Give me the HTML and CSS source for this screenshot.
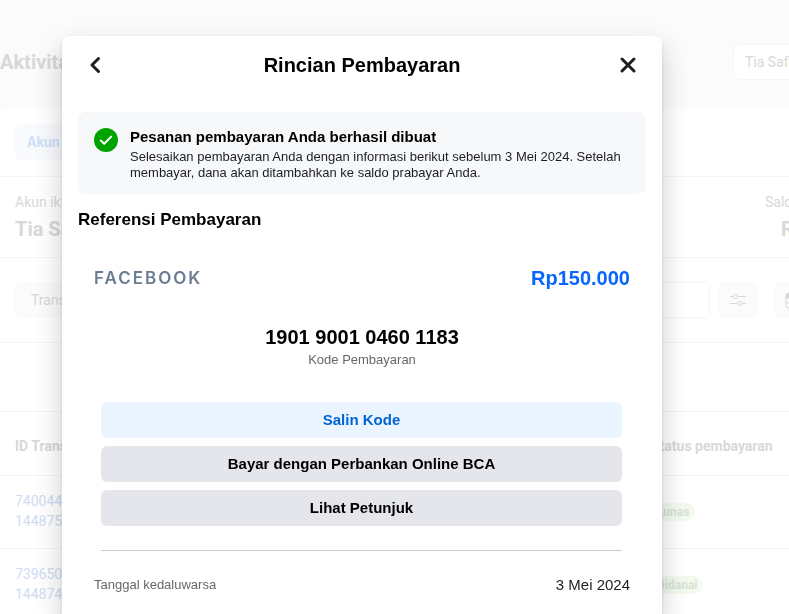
FILE: index.html
```html
<!DOCTYPE html>
<html lang="id">

<head>
    <meta charset="UTF-8">
    <meta name="viewport" content="width=device-width, initial-scale=1.0">
    <title>Rincian Pembayaran</title>
    <link rel="stylesheet" href="styles.css">
</head>

<body>
    <div class="page">
        <header class="page_head">
            <h1>Aktivitas pembayaran</h1>
            <button class="account_btn" type="button">Tia Safitri</button>
        </header>
        <main class="card">
            <nav class="tabs">
                <a href="#" class="tab">Akun iklan</a>
            </nav>
            <div class="account">
                <div>
                    <p>Akun iklan</p>
                    <strong>Tia Safitri</strong>
                </div>
                <div class="balance">
                    <p>Saldo prabayar</p>
                    <strong>Rp150.000</strong>
                </div>
            </div>
            <div class="filter">
                <button class="filter_btn" type="button">Transaksi</button>
                <input class="search" type="text" aria-label="Cari transaksi">
                <button class="icon_btn" type="button" aria-label="Filter">
                    <svg width="18" height="14" viewBox="0 0 18 14" fill="none" stroke="currentColor">
                        <path d="M1 3.500h3M9 3.500h8M1 10.500h7.500M13.500 10.500h3.500" />
                        <circle cx="6.500" cy="3.500" r="2.200" />
                        <circle cx="11" cy="10.500" r="2.200" />
                    </svg>
                </button>
                <button class="icon_btn date_btn" type="button" aria-label="Tanggal">
                    <svg width="18" height="18" viewBox="0 0 18 18" fill="none" stroke="currentColor">
                        <rect x="1" y="2" width="16" height="15" rx="3" />
                        <path d="M1 7V5a3 3 0 0 1 3-3h10a3 3 0 0 1 3 3v2z" fill="currentColor" />
                        <path d="M1 12h16M6 7v10M12 7v10" />
                    </svg>
                </button>
            </div>
            <table class="list">
                <thead>
                    <tr>
                        <th>ID Transaksi</th>
                        <th>Status pembayaran</th>
                    </tr>
                </thead>
                <tbody>
                    <tr>
                        <td><a href="#">740044<br>144875</a></td>
                        <td><span class="badge">Lunas</span></td>
                    </tr>
                    <tr>
                        <td><a href="#">739650<br>144874</a></td>
                        <td><span class="badge">Didanai</span></td>
                    </tr>
                </tbody>
            </table>
        </main>
    </div>

    <div class="layer">
        <section class="modal" role="dialog" aria-labelledby="modal_title">
            <header class="modal_head">
                <button class="nav_btn" type="button" aria-label="Kembali">
                    <svg width="20" height="20" viewBox="0 0 20 20">
                        <path d="M12.500 3.500 6 10l6.500 6.500" />
                    </svg>
                </button>
                <h2 id="modal_title">Rincian Pembayaran</h2>
                <button class="nav_btn" type="button" aria-label="Tutup">
                    <svg width="20" height="20" viewBox="0 0 20 20">
                        <path d="M4 4l12 12M16 4L4 16" />
                    </svg>
                </button>
            </header>

            <div class="notice">
                <svg class="notice_icon" width="24" height="24" viewBox="0 0 24 24">
                    <circle cx="12" cy="12" r="12" fill="#00a400" />
                    <path d="M6.800 12.500l3.400 3.300 7-7.200" fill="none" stroke="#fff" stroke-width="2" stroke-linecap="round" stroke-linejoin="round" />
                </svg>
                <div>
                    <h3>Pesanan pembayaran Anda berhasil dibuat</h3>
                    <p>Selesaikan pembayaran Anda dengan informasi berikut sebelum 3 Mei 2024. Setelah membayar, dana akan ditambahkan ke saldo prabayar Anda.</p>
                </div>
            </div>

            <h3 class="section_title">Referensi Pembayaran</h3>

            <div class="row amount">
                <span class="brand">FACEBOOK</span>
                <span class="price">Rp150.000</span>
            </div>

            <div class="code">
                <strong>1901 9001 0460 1183</strong>
                <span>Kode Pembayaran</span>
            </div>

            <div class="actions">
                <button class="btn btn_primary" type="button">Salin Kode</button>
                <button class="btn" type="button">Bayar dengan Perbankan Online BCA</button>
                <button class="btn" type="button">Lihat Petunjuk</button>
            </div>

            <div class="row expiry">
                <span class="label">Tanggal kedaluwarsa</span>
                <span class="date">3 Mei 2024</span>
            </div>
        </section>
    </div>
</body>

</html>
```

FILE: styles.css
```css
* {
    margin: 0;
    padding: 0;
    box-sizing: border-box;
}

html,
body {
    height: 100%;
}

body {
    overflow: hidden;
    font-family: Roboto, "Liberation Sans", sans-serif;
    font-size: 14px;
    line-height: 20px;
    color: #d8d8d8;
    background: #fbfbfb;
}

button,
input {
    font: inherit;
    color: inherit;
    border: none;
}

a {
    text-decoration: none;
    color: #cfdcf3;
}

/* the page behind the dialog, it runs past the right edge */
.page {
    width: calc(100% + 71px);
}

.page_head {
    display: flex;
    align-items: center;
    justify-content: space-between;
    height: 108px;
    padding-top: 16px;
}

.page_head h1 {
    font-size: 20px;
}

.account_btn {
    width: 127px;
    height: 36px;
    padding: 0 11px;
    text-align: left;
    background: #fff;
    border: 1px solid #f5f5f5;
    border-radius: 6px;
}

.card {
    background: #fff;
    border-radius: 8px 8px 0 0;
}

.tabs {
    display: flex;
    padding: 16px 15px;
    border-bottom: 1px solid #f5f5f5;
}

.tab {
    padding: 8px 12px;
    font-weight: bold;
    color: #cfe0f8;
    background: #f8fafe;
    border-radius: 6px;
}

.account {
    display: flex;
    justify-content: space-between;
    padding: 15px 0 13px 15px;
    border-bottom: 1px solid #f5f5f5;
}

.account strong {
    display: block;
    margin-top: 2px;
    font-size: 20px;
    line-height: 30px;
}

.balance {
    width: 95px;
}

.balance p {
    white-space: nowrap;
}

.balance strong {
    padding-left: 16px;
}

.filter {
    display: flex;
    align-items: center;
    gap: 8px;
    padding: 24px 46px 24px 15px;
    border-bottom: 1px solid #f5f5f5;
}

.filter_btn {
    height: 36px;
    padding: 0 16px;
    background: #fbfbfb;
    border-radius: 6px;
}

.search {
    flex: 1;
    height: 36px;
    padding: 0 12px;
    background: #fff;
    border: 1px solid #f5f5f5;
    border-radius: 6px;
}

.icon_btn {
    display: flex;
    align-items: center;
    justify-content: center;
    width: 40px;
    height: 36px;
    background: #fbfbfb;
    border-radius: 6px;
}

.date_btn {
    margin-left: 8px;
}

.list {
    width: 100%;
    margin-top: 68px;
    border-collapse: collapse;
    border-top: 1px solid #f5f5f5;
    table-layout: fixed;
}

.list th,
.list td {
    padding: 15px 15px 17px;
    text-align: left;
    border-bottom: 1px solid #f5f5f5;
}

.list th {
    padding: 24px 15px 19px;
}

.list th:last-child,
.list td:last-child {
    width: 209px;
    padding-left: 0;
}

.badge {
    display: inline-block;
    padding: 0 6px;
    font-size: 12px;
    line-height: 18px;
    font-weight: bold;
    color: #d6e4d2;
    background: #f4faf0;
    border-radius: 9px;
}

/* dialog */
.layer {
    position: fixed;
    top: 0;
    right: 0;
    bottom: 0;
    left: 0;
    padding: 36px 127px 0 62px;
}

.modal {
    min-height: 100%;
    padding: 15px 16px 20px;
    font-family: "Liberation Sans", Arial, sans-serif;
    color: #000;
    background: #fff;
    border-radius: 8px 8px 0 0;
    box-shadow: 0 12px 28px rgba(0, 0, 0, 0.2), 0 2px 4px rgba(0, 0, 0, 0.1);
}

.modal_head {
    display: flex;
    align-items: center;
    justify-content: space-between;
    padding: 0 8px;
}

.modal_head h2 {
    font-size: 20px;
    line-height: 28px;
}

.nav_btn {
    display: flex;
    align-items: center;
    width: 20px;
    height: 28px;
    background: none;
    cursor: pointer;
}

.nav_btn svg {
    fill: none;
    stroke: #1c1e21;
    stroke-width: 3;
    stroke-linecap: round;
    stroke-linejoin: round;
}

.notice {
    display: flex;
    gap: 12px;
    margin-top: 33px;
    padding: 16px 16px 13px;
    background: #f7f8fa;
    border-radius: 8px;
}

.notice_icon {
    flex: none;
}

.notice h3 {
    font-size: 15px;
    line-height: 18px;
}

.notice p {
    margin-top: 3px;
    font-size: 13px;
    line-height: 16px;
    color: #1c1e21;
}

.section_title {
    margin-top: 16px;
    font-size: 17px;
    line-height: 20px;
}

.row {
    display: flex;
    align-items: center;
    justify-content: space-between;
    padding: 0 16px;
}

.amount {
    margin-top: 36px;
}

.brand {
    font-family: Inter, sans-serif;
    font-size: 17px;
    line-height: 24px;
    font-weight: 600;
    letter-spacing: 2px;
    color: #6b7c93;
}

.price {
    font-size: 20px;
    line-height: 24px;
    font-weight: bold;
    color: #0866ff;
}

.code {
    display: flex;
    flex-direction: column;
    align-items: center;
    gap: 1px;
    margin-top: 35px;
}

.code strong {
    font-size: 20px;
    line-height: 24px;
}

.code span {
    font-size: 13px;
    line-height: 20px;
    color: #65676b;
}

.actions {
    display: flex;
    flex-direction: column;
    gap: 8px;
    margin: 32px 24px 0 23px;
    padding-bottom: 24px;
    border-bottom: 1px solid #c8c8d0;
}

.btn {
    height: 36px;
    font-size: 15px;
    font-weight: bold;
    background: #e4e6eb;
    border-radius: 6px;
    cursor: pointer;
}

.btn_primary {
    color: #0064d1;
    background: #ebf5ff;
}

.expiry {
    margin-top: 24px;
}

.label {
    font-size: 13px;
    color: #65676b;
}

.date {
    font-size: 15px;
    color: #1c1e21;
}
```
